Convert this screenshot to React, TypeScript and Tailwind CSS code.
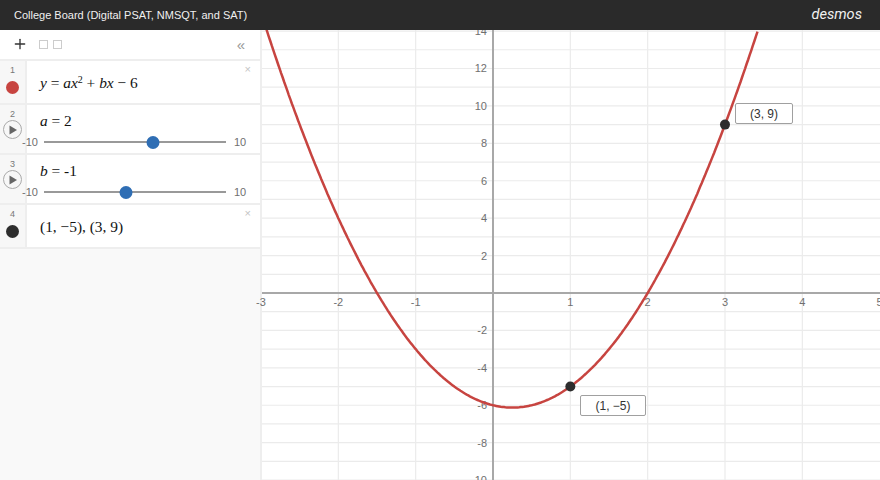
import { ReactNode } from 'react';
import { Plus } from 'lucide-react';

// graph scale, in page pixels
const originX = 493;
const originY = 293;
const unitX = 77.33;
const unitY = 18.71;

const px = (x: number) => originX + x * unitX;
const py = (y: number) => originY - y * unitY;

const curvePath = () => {
  const pts: string[] = [];
  for (let x = -2.94; x <= 3.44; x += 0.02) {
    pts.push(`${px(x).toFixed(1)},${py(2 * x * x - x - 6).toFixed(1)}`);
  }
  return 'M' + pts.join('L');
};

const xTicks = [-3, -2, -1, 1, 2, 3, 4, 5];
const yTicks = [14, 12, 10, 8, 6, 4, 2, -2, -4, -6, -8, -10];
const gridY = Array.from({ length: 25 }, (_, i) => i - 10);

function Graph() {
  return (
    <svg
      viewBox="260 30 620 450"
      width={620}
      height={450}
      className="block shrink-0 overflow-visible bg-white"
      style={{ fontFamily: '"Liberation Sans", Arial, sans-serif' }}
    >
      <rect x={260} y={30} width={2} height={450} fill="#eeeeee" />
      {gridY.map((y) => (
        <line key={y} x1={262} x2={880} y1={py(y)} y2={py(y)} stroke="#ebebeb" strokeWidth={1.2} />
      ))}
      {[-2, -1, 1, 2, 3, 4].map((x) => (
        <line key={x} x1={px(x)} x2={px(x)} y1={30} y2={480} stroke="#ebebeb" strokeWidth={1.2} />
      ))}
      <line x1={262} x2={880} y1={originY} y2={originY} stroke="#a8a8a8" strokeWidth={2} />
      <line x1={originX} x2={originX} y1={30} y2={480} stroke="#a8a8a8" strokeWidth={2} />

      {xTicks.map((x) => (
        <text key={x} x={px(x)} y={306} textAnchor="middle" fontSize={11} fill="#6f6f6f">
          {x}
        </text>
      ))}
      {yTicks.map((y) => (
        <text key={y} x={487} y={py(y) + 4} textAnchor="end" fontSize={11} fill="#6f6f6f">
          {y}
        </text>
      ))}

      <path d={curvePath()} fill="none" stroke="#c74440" strokeWidth={2.5} />
      <circle cx={px(1)} cy={py(-5)} r={5} fill="#2d2d2d" />
      <circle cx={px(3)} cy={py(9)} r={5} fill="#2d2d2d" />
    </svg>
  );
}

function PointLabel({ text, className }: { text: string; className: string }) {
  return (
    <div
      className={`absolute flex h-[21px] items-center justify-center rounded-[2px] border border-[#a0a0a0] bg-white text-[12px] text-[#333] ${className}`}
    >
      {text}
    </div>
  );
}

function PlayButton() {
  return (
    <div className="flex h-[19px] w-[19px] items-center justify-center rounded-full border border-[#aaa] bg-[#f7f7f7]">
      <svg width="10" height="10" viewBox="0 0 10 10">
        <path d="M1.5 0.5 L9 5 L1.5 9.5 Z" fill="#666" />
      </svg>
    </div>
  );
}

function Row({
  num,
  icon,
  height,
  closable,
  children,
}: {
  num: number;
  icon: ReactNode;
  height: string;
  closable?: boolean;
  children: ReactNode;
}) {
  return (
    <div className={`relative flex border-b-2 border-[#eeeeee] bg-white ${height}`}>
      <div className="flex w-[27px] shrink-0 flex-col items-center border-r-2 border-[#eeeeee] bg-[#f7f7f7] pt-[4px]">
        <span className="text-[9px] leading-[11px] text-[#777]">{num}</span>
        {icon}
      </div>
      <div className="min-w-0 flex-1">{children}</div>
      {closable && (
        <span className="absolute right-[9px] top-[1px] text-[11px] leading-[14px] text-[#c4c4c4]">×</span>
      )}
    </div>
  );
}

function Slider({ value }: { value: number }) {
  const left = ((value + 10) / 20) * 182;
  return (
    <div className="mt-[1px] flex h-[20px] items-center">
      <span className="relative w-[17px] shrink-0 -translate-x-[5px] text-[11px] text-[#6f6f6f]">-10</span>
      <div className="relative h-[2px] w-[182px] shrink-0 bg-[#999]">
        <div
          className="absolute top-[-5.5px] h-[13px] w-[13px] -translate-x-1/2 rounded-full bg-[#2f6eb4]"
          style={{ left }}
        />
      </div>
      <span className="ml-[8px] text-[11px] text-[#6f6f6f]">10</span>
    </div>
  );
}

const mathFont = { fontFamily: '"Liberation Serif", "Times New Roman", serif' };

export default function App() {
  return (
    <div
      className="flex h-[480px] w-[880px] flex-col overflow-hidden bg-white"
      style={{ fontFamily: '"Liberation Sans", Arial, sans-serif' }}
    >
      {/* Header */}
      <header className="relative z-10 flex h-[30px] shrink-0 items-center justify-between bg-[#2a2a2a] pl-[14px] pr-[18px]">
        <span className="text-[11px] text-[#f0f0f0]">College Board (Digital PSAT, NMSQT, and SAT)</span>
        <span className="text-[14.6px] italic text-[#f0f0f0]" style={{ fontFamily: 'Roboto, sans-serif' }}>
          desmos
        </span>
      </header>

      <div className="relative flex min-h-0 flex-1">
        {/* Expression list */}
        <aside className="w-[262px] shrink-0 border-r-2 border-[#eeeeee] bg-[#f9f9f9]">
          <div className="flex h-[31px] items-center border-b-2 border-[#eeeeee] bg-white pb-[1px] pl-[12px] pr-[15px]">
            <Plus className="h-4 w-4 text-[#333]" strokeWidth={2} />
            <span className="ml-[11px] h-[9px] w-[9px] border border-[#ccc]" />
            <span className="ml-[5px] h-[9px] w-[9px] border border-[#ccc]" />
            <span className="ml-auto text-[15px] leading-none text-[#999]">«</span>
          </div>

          <Row
            num={1}
            height="h-[44px]"
            closable
            icon={<span className="mt-[5px] h-[13px] w-[13px] rounded-full bg-[#c74440]" />}
          >
            <div className="pl-[13px] pt-[12px] text-[15.4px] leading-[20px] text-[#111]" style={mathFont}>
              <i>y</i> = <i>ax</i>
              <sup className="text-[10px]">2</sup> + <i>bx</i> − 6
            </div>
          </Row>

          <Row num={2} height="h-[50px]" icon={<PlayButton />}>
            <div className="pl-[13px] pt-[6px] text-[15.4px] leading-[20px] text-[#111]" style={mathFont}>
              <i>a</i> = 2
            </div>
            <Slider value={2} />
          </Row>

          <Row num={3} height="h-[50px]" icon={<PlayButton />}>
            <div className="pl-[13px] pt-[6px] text-[15.4px] leading-[20px] text-[#111]" style={mathFont}>
              <i>b</i> = -1
            </div>
            <Slider value={-1} />
          </Row>

          <Row
            num={4}
            height="h-[44px]"
            closable
            icon={<span className="mt-[5px] h-[13px] w-[13px] rounded-full bg-[#2d2d2d]" />}
          >
            <div className="pl-[13px] pt-[12px] text-[15.4px] leading-[20px] text-[#111]" style={mathFont}>
              (1, −5), (3, 9)
            </div>
          </Row>
        </aside>

        {/* Graph */}
        <main className="-ml-[2px] relative min-w-0 flex-1">
          <Graph />
          <PointLabel text="(3, 9)" className="left-[475px] top-[73px] w-[58px]" />
          <PointLabel text="(1, −5)" className="left-[320px] top-[365px] w-[66px]" />
        </main>
      </div>
    </div>
  );
}
